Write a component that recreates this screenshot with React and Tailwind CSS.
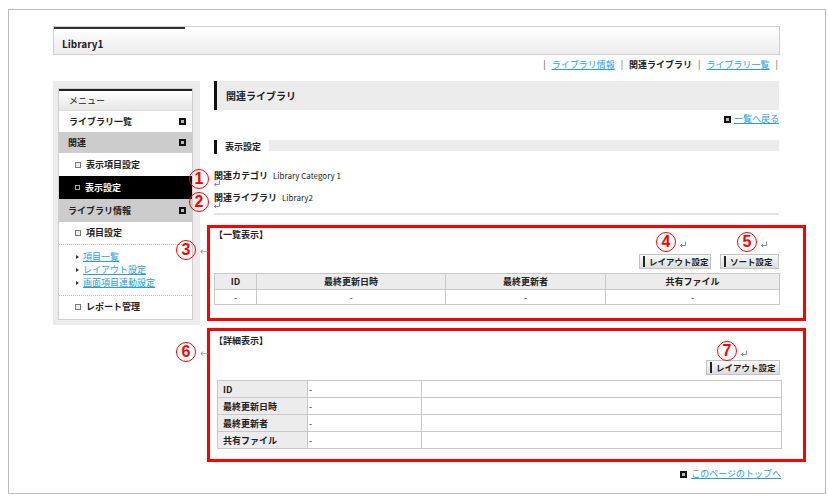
import React from "react";

const jp = { fontFamily: '"Noto Sans CJK JP", "Noto Sans", sans-serif' };

function Sq() {
  return (
    <span className="inline-flex w-[7px] h-[7px] bg-[#111] items-center justify-center shrink-0">
      <span className="w-[3px] h-[3px] bg-[#bbb]" />
    </span>
  );
}

function Circle({ n, x, y }) {
  return (
    <div
      className="absolute w-[20px] h-[20px] rounded-full border-[1.5px] border-[#ff0000] text-[#ff0000] flex items-center justify-center text-[16px] font-bold leading-none"
      style={{ left: x - 10, top: y - 10, fontFamily: '"Liberation Sans", Arial, sans-serif' }}
    >
      {n}
    </div>
  );
}

// paragraph mark drawn in the screenshot
function Ret({ x, y }) {
  return (
    <svg className="absolute" style={{ left: x, top: y }} width="8" height="7" viewBox="0 0 8 7">
      <path d="M6.5 0.5 V4.5 H1.5 M3.2 2.8 L1.5 4.5 L3.2 6.2" fill="none" stroke="#8a8a8a" strokeWidth="1" />
    </svg>
  );
}

function Btn({ children, w }) {
  return (
    <div
      className={`h-[15px] ${w} flex items-center border border-[#c4c4c4] bg-gradient-to-b from-[#fafafa] to-[#dcdcdc] text-[8.5px] font-bold text-[#222] whitespace-nowrap overflow-hidden`}
    >
      <span className="w-[2px] h-[11px] ml-[3px] mr-[4px] border-l-2 border-dashed border-[#222] shrink-0" />
      {children}
    </div>
  );
}

function MenuRow({ children, kind, icon, h }) {
  const base = "flex items-center justify-between text-[9px] font-bold pr-[6px] ";
  const cls =
    kind === "gray"
      ? "bg-[#cccccc] text-[#222] pl-[9px]"
      : kind === "black"
      ? "bg-black text-white pl-[16px]"
      : kind === "sub"
      ? "bg-white text-[#222] pl-[16px]"
      : "bg-white text-[#222] pl-[10px]";
  return (
    <div className={base + cls + " " + h}>
      <span className="flex items-center gap-[5px]">
        {(kind === "sub" || kind === "black") && (
          <span
            className={
              kind === "black"
                ? "w-[5px] h-[5px] border border-[#aaa] bg-black"
                : "w-[6px] h-[6px] border border-[#777] bg-[#eee]"
            }
          />
        )}
        {children}
      </span>
      {icon && <Sq />}
    </div>
  );
}

export default function App() {
  return (
    <div className="relative w-[828px] h-[499px] bg-white text-[#222] pt-[9px]" style={jp}>
      <div className="ml-[8px] w-[818px] h-[485px] border border-[#bdbdbd] pl-[44px] pt-[16px]">
        {/* header */}
        <div className="w-[727px] h-[29px] border border-[#cfcfcf] bg-gradient-to-b from-white to-[#ececec]">
          <div className="w-[131px] h-[2px] bg-[#333]" />
          <div className="pl-[8px] pt-[9px] text-[10px] leading-[12px] font-bold">Library1</div>
        </div>

        {/* nav */}
        <div className="w-[725px] mt-[4px] flex justify-end items-center gap-[6px] text-[9px] leading-[12px]">
          <span className="text-[#555]">|</span>
          <span className="text-[#2a9fd6] underline">ライブラリ情報</span>
          <span className="text-[#555]">|</span>
          <span className="font-bold">関連ライブラリ</span>
          <span className="text-[#555]">|</span>
          <span className="text-[#2a9fd6] underline">ライブラリ一覧</span>
          <span className="text-[#555]">|</span>
        </div>

        <div className="flex mt-[10px]">
          {/* sidebar */}
          <div className="w-[147px] h-[244px] bg-[#ececec] pl-[5px] pt-[7px]">
            <div className="w-[135px] h-[232px] bg-white border border-[#cfcfcf]">
              <div className="h-[22px] border-t-2 border-[#222] bg-gradient-to-b from-white to-[#e6e6e6] flex items-center pl-[10px] text-[9px] border-b border-b-[#ddd]">
                メニュー
              </div>
              <MenuRow kind="white" icon h="h-[21px]">ライブラリ一覧</MenuRow>
              <MenuRow kind="gray" icon h="h-[21px]">関連</MenuRow>
              <MenuRow kind="sub" h="h-[23px]">表示項目設定</MenuRow>
              <MenuRow kind="black" h="h-[23px]">表示設定</MenuRow>
              <MenuRow kind="gray" icon h="h-[23px]">ライブラリ情報</MenuRow>
              <div className="border-b border-dotted border-[#bbb]">
                <MenuRow kind="sub" h="h-[22px]">項目設定</MenuRow>
              </div>
              <div className="pt-[6px] pb-[6px] pl-[17px] border-b border-dotted border-[#bbb] flex flex-col gap-[1px]">
                {["項目一覧", "レイアウト設定", "画面項目連動設定"].map((t) => (
                  <div key={t} className="flex items-center gap-[4px] h-[12px] text-[9px]">
                    <span className="w-0 h-0 border-y-[2.5px] border-y-transparent border-l-[3px] border-l-[#333]" />
                    <span className="text-[#2a9fd6] underline">{t}</span>
                  </div>
                ))}
              </div>
              <MenuRow kind="sub" h="h-[22px]">レポート管理</MenuRow>
            </div>
          </div>

          {/* content */}
          <div className="w-[565px] ml-[14px]">
            <div className="h-[29px] bg-[#ececec] border-l-[3px] border-[#111] pl-[9px] flex items-center text-[10px] font-bold">
              関連ライブラリ
            </div>
            <div className="mt-[3px] h-[12px] flex justify-end items-center gap-[3px] text-[9px]">
              <Sq />
              <span className="text-[#2a9fd6] underline">一覧へ戻る</span>
            </div>

            <div className="mt-[15px] h-[14px] flex items-start">
              <span className="w-[3px] h-[14px] bg-[#111]" />
              <span className="ml-[8px] text-[9px] font-bold leading-[14px]">表示設定</span>
              <span className="ml-[8px] flex-1 h-[11px] bg-[#ececec]" />
            </div>

            <div className="mt-[16px] h-[11px] flex items-end gap-[5px]">
              <span className="text-[9px] font-bold leading-[11px]">関連カテゴリ</span>
              <span className="text-[8px] leading-[11px]">Library Category 1</span>
            </div>
            <div className="mt-[11px] h-[11px] flex items-end gap-[5px]">
              <span className="text-[9px] font-bold leading-[11px]">関連ライブラリ</span>
              <span className="text-[8px] leading-[11px]">Library2</span>
            </div>
            <div className="mt-[10px] h-[2px] bg-[#e2e2e2]" />

            {/* 一覧表示 */}
            <div className="relative mt-[10px] pt-[5px] pb-[16px]">
              <div className="absolute top-0 bottom-0 -left-[7px] -right-[27px] border-[3px] border-[#ff0000]" />
              <div className="text-[9px] font-bold leading-[10px]">【一覧表示】</div>
              <div className="mt-[14px] flex justify-end gap-[9px]">
                <Btn w="w-[72px]">レイアウト設定</Btn>
                <Btn w="w-[59px]">ソート設定</Btn>
              </div>
              <table className="mt-[4px] w-[565px] border-collapse text-[9px] table-fixed">
                <colgroup>
                  <col className="w-[42px]" />
                  <col className="w-[189px]" />
                  <col className="w-[160px]" />
                  <col className="w-[174px]" />
                </colgroup>
                <thead>
                  <tr className="h-[16px] bg-[#ececec]">
                    {["ID", "最終更新日時", "最終更新者", "共有ファイル"].map((t) => (
                      <th key={t} className="border border-[#c8c8c8] font-bold leading-[14px] p-0">{t}</th>
                    ))}
                  </tr>
                </thead>
                <tbody>
                  <tr className="h-[15px]">
                    {[0, 1, 2, 3].map((i) => (
                      <td key={i} className="border border-[#c8c8c8] text-center leading-[13px] p-0">-</td>
                    ))}
                  </tr>
                </tbody>
              </table>
            </div>

            {/* 詳細表示 */}
            <div className="relative mt-[7px] pt-[8px] pb-[13px]">
              <div className="absolute top-0 bottom-0 -left-[7px] -right-[27px] border-[3px] border-[#ff0000]" />
              <div className="text-[9px] font-bold leading-[10px]">【詳細表示】</div>
              <div className="mt-[14px] flex justify-end -mr-[1px]">
                <Btn w="w-[74px]">レイアウト設定</Btn>
              </div>
              <table className="mt-[5px] ml-[3px] w-[564px] border-collapse text-[9px] table-fixed">
                <colgroup>
                  <col className="w-[90px]" />
                  <col className="w-[114px]" />
                  <col className="w-[360px]" />
                </colgroup>
                <tbody>
                  {["ID", "最終更新日時", "最終更新者", "共有ファイル"].map((t) => (
                    <tr key={t} className="h-[17px]">
                      <th className="border border-[#c8c8c8] bg-[#ececec] font-bold text-left pl-[5px] leading-[15px] p-0">{t}</th>
                      <td className="border border-[#c8c8c8] pl-[1px] leading-[15px] p-0">-</td>
                      <td className="border border-[#c8c8c8] p-0" />
                    </tr>
                  ))}
                </tbody>
              </table>
            </div>

            <div className="mt-[7px] -mr-[2px] h-[10px] flex justify-end items-center gap-[4px] text-[9px]">
              <Sq />
              <span className="text-[#2a9fd6] underline leading-[10px]">このページのトップへ</span>
            </div>
          </div>
        </div>
      </div>

      {/* annotations */}
      <Circle n="1" x={199} y={179} />
      <Ret x={213} y={180} />
      <Circle n="2" x={199} y={202} />
      <Ret x={213} y={202} />
      <Circle n="3" x={186} y={250} />
      <span className="absolute left-[200px] top-[247px] text-[9px] leading-none text-[#888]">←</span>
      <Circle n="6" x={186} y={352} />
      <span className="absolute left-[200px] top-[349px] text-[9px] leading-none text-[#888]">←</span>
      <Circle n="4" x={666} y={242} />
      <Ret x={679} y={241} />
      <Circle n="5" x={747} y={242} />
      <Ret x={760} y={241} />
      <Circle n="7" x={727} y={351} />
      <Ret x={740} y={350} />
    </div>
  );
}
